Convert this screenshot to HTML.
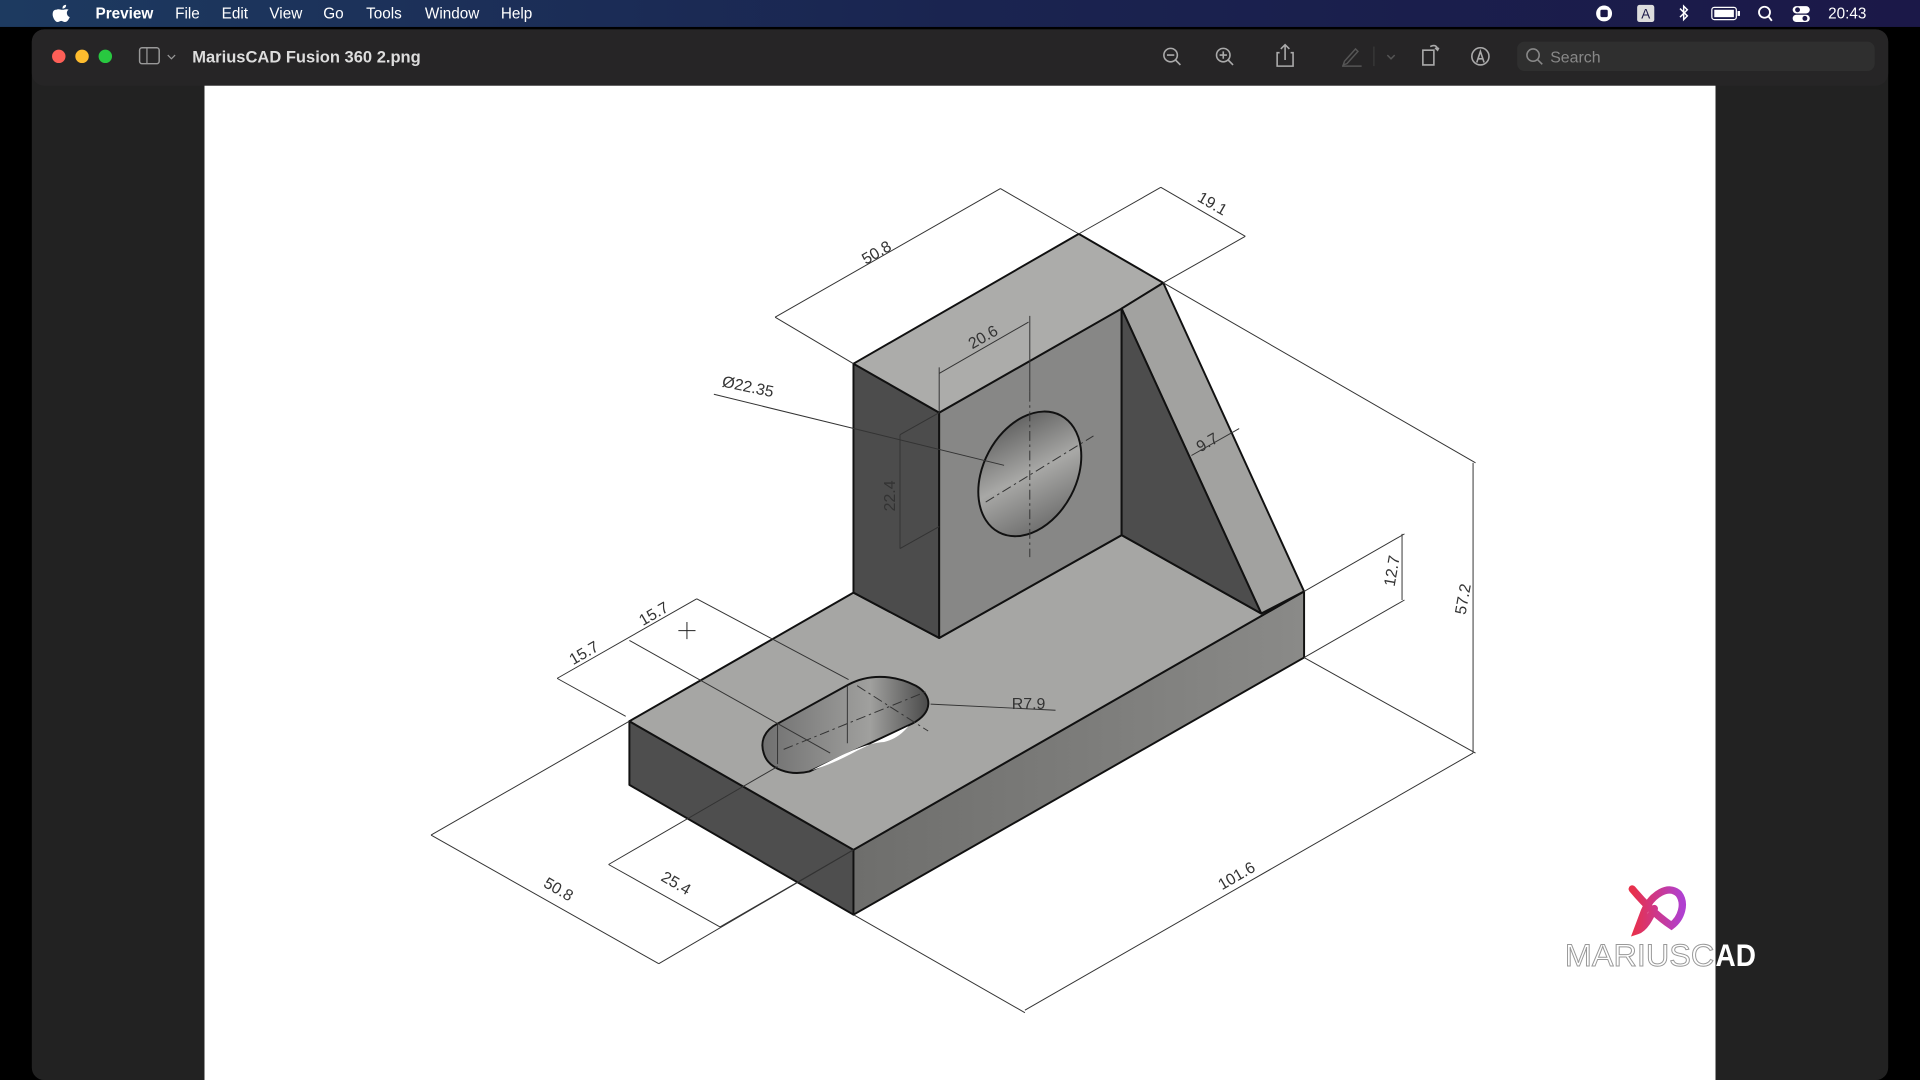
<!DOCTYPE html>
<html><head><meta charset="utf-8"><style>
html,body{margin:0;padding:0;background:#000;width:1920px;height:1080px;overflow:hidden}
svg{display:block}
text{font-family:"Liberation Sans",sans-serif}
</style></head><body>
<svg width="1920" height="1080" viewBox="0 0 1568 882" xmlns="http://www.w3.org/2000/svg">
<defs>
<linearGradient id="mb" x1="0" x2="1"><stop offset="0" stop-color="#1d3a60"/><stop offset="0.5" stop-color="#1a2450"/><stop offset="1" stop-color="#1b1848"/></linearGradient>
<linearGradient id="fr" x1="0" x2="1"><stop offset="0" stop-color="#6e6e6c"/><stop offset="1" stop-color="#8a8a88"/></linearGradient>
<linearGradient id="hole" x1="0" y1="0" x2="1" y2="1"><stop offset="0" stop-color="#4a4a4a"/><stop offset="0.5" stop-color="#a8a8a6"/><stop offset="1" stop-color="#5a5a5a"/></linearGradient>
<linearGradient id="slot" x1="0" x2="1"><stop offset="0" stop-color="#707070"/><stop offset="0.65" stop-color="#a0a09e"/><stop offset="1" stop-color="#4a4a4a"/></linearGradient>
<linearGradient id="logo" x1="0" x2="1"><stop offset="0" stop-color="#e8304a"/><stop offset="1" stop-color="#b040d0"/></linearGradient>
</defs>
<rect width="1568" height="882" fill="#000"/>
<rect width="1568" height="22" fill="url(#mb)"/>
<path d="M46 8c2-1 3 0 5 0s3-1 5 0c-2 1-2 5 1 6-1 2-2 4-4 4-1 0-2-1-3-1s-2 1-3 1c-2 0-4-4-4-6 0-3 1-4 3-4zM51 7c0-2 1-3 3-3 0 2-1 3-3 3z" fill="#fff"/>
<g fill="#fff" font-size="12.5"><text x="78" y="15" font-weight="bold">Preview</text><text x="143" y="15">File</text><text x="181" y="15">Edit</text><text x="220" y="15">View</text><text x="264" y="15">Go</text><text x="299" y="15">Tools</text><text x="347" y="15">Window</text><text x="409" y="15">Help</text>
<text x="1493" y="15" font-size="12.5">20:43</text></g>
<circle cx="1310" cy="11" r="6.5" fill="#fff"/><rect x="1307" y="8" width="6" height="6" rx="1" fill="#1b1848"/>
<rect x="1337" y="4" width="14" height="14" rx="2" fill="#ddd"/><text x="1344" y="15" font-size="11" fill="#1b1848" text-anchor="middle">A</text>
<path d="M1372 7l6 6-3 3V5l3 3-6 6" stroke="#fff" fill="none" stroke-width="1.2"/>
<rect x="1398" y="6" width="20" height="10" rx="2" fill="none" stroke="#fff"/><rect x="1400" y="8" width="16" height="6" fill="#fff"/><rect x="1419" y="9" width="2" height="4" fill="#fff"/>
<circle cx="1441" cy="10" r="4.5" fill="none" stroke="#fff" stroke-width="1.5"/><path d="M1444 13l3 4" stroke="#fff" stroke-width="1.5"/>
<rect x="1464" y="5" width="14" height="6" rx="3" fill="#fff"/><rect x="1464" y="12" width="14" height="6" rx="3" fill="#fff"/><circle cx="1468" cy="8" r="2" fill="#1b1848"/><circle cx="1474" cy="15" r="2" fill="#1b1848"/>
<rect x="26" y="24" width="1516" height="858" rx="10" fill="#222222"/>
<rect x="26" y="24" width="1516" height="46" rx="10" fill="#262526"/>
<circle cx="48" cy="46" r="5.5" fill="#fe5f57"/><circle cx="67" cy="46" r="5.5" fill="#febc2e"/><circle cx="86" cy="46" r="5.5" fill="#28c840"/>
<rect x="114" y="39" width="16" height="13" rx="2" fill="none" stroke="#999" stroke-width="1.2"/><line x1="120" y1="39" x2="120" y2="52" stroke="#999"/><path d="M137 45l3 3 3-3" stroke="#999" fill="none"/>
<text x="157" y="51" fill="#ddd" font-size="13.5" font-weight="bold">MariusCAD Fusion 360 2.png</text>
<g stroke="#aaa" fill="none" stroke-width="1.3">
<circle cx="956" cy="45" r="5.5"/><path d="M960 49l4 4M953 45h6"/>
<circle cx="999" cy="45" r="5.5"/><path d="M1003 49l4 4M996 45h6M999 42v6"/>
<path d="M1045 43h-2v11h13V43h-2M1049.5 49V37M1046 40l3.5-3.5 3.5 3.5"/>
<path d="M1162 41h9v12h-9zM1168 38c4-2 6 0 6 3M1172 39l2 2 1-2"/>
<circle cx="1209" cy="46" r="7"/><path d="M1206 51l3-9 3 9M1207 48h4"/>
</g>
<g stroke="#555" fill="none" stroke-width="1.2"><path d="M1098 50l9-10 2 2-9 10-3 1zM1096 54h16"/><path d="M1133 45l3 3 3-3"/></g>
<line x1="1122" y1="38" x2="1122" y2="54" stroke="#3a3a3a"/>
<rect x="1239" y="34" width="292" height="24" rx="6" fill="#2f2f2f"/>
<circle cx="1252" cy="45" r="5" fill="none" stroke="#888" stroke-width="1.3"/><path d="M1255.5 48.5l4 4" stroke="#888" stroke-width="1.3"/>
<text x="1266" y="51" fill="#888" font-size="13">Search</text>
<rect x="167" y="70" width="1234" height="812" fill="#fff"/>
<!-- part -->
<g stroke="#111" stroke-width="1.6" stroke-linejoin="round">
<polygon points="514,589 697,694 697,747 514,641" fill="#4e4e4e"/>
<polygon points="697,694 1065,483 1065,537 697,747" fill="url(#fr)"/>
<polygon points="514,589 697,484 767,521 916,437 1030,501 1065,483 697,694" fill="#a6a6a4"/>
<polygon points="697,297 767,337 767,521 697,484" fill="#4c4c4c"/>
<polygon points="767,337 916,252 916,437 767,521" fill="#878786"/>
<polygon points="697,297 881,191 950,231 916,252 767,337" fill="#acacaa"/>
<polygon points="916,252 950,231 1065,483 1030,501" fill="#a2a2a0"/>
<polygon points="916,252 1030,501 916,437" fill="#4d4d4d"/>
<ellipse cx="841" cy="387" rx="38" ry="54" transform="rotate(28 841 387)" fill="url(#hole)"/>
<path d="M635 591 L693 559 C708 551 728 550 748 560 C762 568 762 582 745 591 L661 630 C645 634 628 628 624 616 C620 605 625 596 635 591 Z" fill="url(#slot)"/>
</g>
<path d="M663 629 C685 618 705 607 722 606 C730 604 736 600 742 593 L700 613 Q 680 624 663 629 Z" fill="#fff"/>
<g stroke="#333" stroke-width="0.8" fill="none">
<line x1="635" y1="592" x2="635" y2="624"/><line x1="692" y1="560" x2="692" y2="607"/>
<g stroke-dasharray="8,3,2,3"><line x1="640" y1="612" x2="756" y2="565"/><line x1="805" y1="410" x2="893" y2="356"/><line x1="841" y1="320" x2="841" y2="455"/><line x1="700" y1="560" x2="758" y2="597"/></g>
<path d="M697 297L633 259M881 191L817 154M633 259L817 154"/>
<path d="M881 191L948 153M950 231L1017 193M948 153L1017 193"/>
<path d="M950 231L1205 378M1065 537L1205 615M1203 378V615"/>
<path d="M1065 483L1147 436M1065 537L1147 490M1145 436V490"/>
<path d="M697 747L837 827M837 825L1203 615"/>
<path d="M514 589L352 682M538 787L697 694M352 682L538 787"/>
<path d="M497 706L635 626M588 757L697 694M497 706L588 757"/>
<path d="M455 554L569 489M455 554L511 585M514 523L678 615M569 489L693 555"/>
<path d="M735 355V448M767 337L735 355M767 430L735 448"/>
<path d="M767 305L840 263M767 337V300M841 258V320"/>
<path d="M583 322L820 380"/>
<path d="M973 372L1012 350"/>
<path d="M760 575L862 580"/>
<path d="M561 508V522M554 515H568" stroke="#222"/>
</g>
<g fill="#333" font-size="13">
<text transform="translate(718 210) rotate(-30)" text-anchor="middle">50.8</text>
<text transform="translate(988 170) rotate(30)" text-anchor="middle">19.1</text>
<text transform="translate(1199 490) rotate(-80)" text-anchor="middle">57.2</text>
<text transform="translate(1141 467) rotate(-80)" text-anchor="middle">12.7</text>
<text transform="translate(1012 719) rotate(-30)" text-anchor="middle">101.6</text>
<text transform="translate(454 730) rotate(30)" text-anchor="middle">50.8</text>
<text transform="translate(550 725) rotate(30)" text-anchor="middle">25.4</text>
<text transform="translate(479 537) rotate(-30)" text-anchor="middle">15.7</text>
<text transform="translate(536 505) rotate(-30)" text-anchor="middle">15.7</text>
<text transform="translate(731 405) rotate(-90)" text-anchor="middle">22.4</text>
<text transform="translate(805 279) rotate(-30)" text-anchor="middle">20.6</text>
<text transform="translate(988 365) rotate(-30)" text-anchor="middle">9.7</text>
<text transform="translate(610 320) rotate(12)" text-anchor="middle">Ø22.35</text>
<text x="840" y="579" text-anchor="middle">R7.9</text>
</g>
<path d="M1333 726c10 12 20 22 32 30 8-6 12-18 6-26-8-8-22 0-28 14l-6 16c6-2 10-10 14-18" fill="none" stroke="url(#logo)" stroke-width="6" stroke-linecap="round"/>
<text x="1278" y="789" font-size="26" fill="#fff" stroke="#999" stroke-width="0.8" textLength="122" lengthAdjust="spacingAndGlyphs">MARIUSC</text>
<text x="1401" y="789" font-size="26" fill="#fff" font-weight="bold" textLength="33" lengthAdjust="spacingAndGlyphs">AD</text>
</svg>
</body></html>
